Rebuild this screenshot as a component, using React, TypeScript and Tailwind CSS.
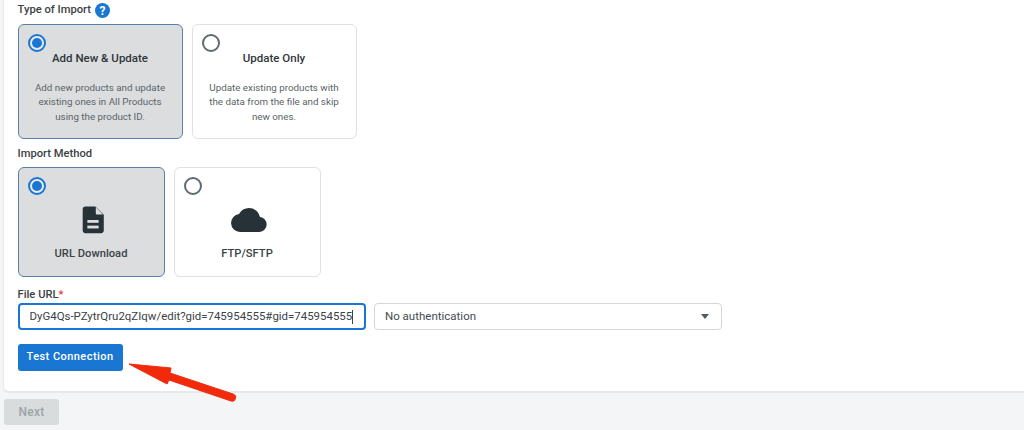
import { useState } from 'react';

function Radio({ checked }: { checked: boolean }) {
  return checked ? (
    <span className="flex h-[18px] w-[18px] items-center justify-center rounded-full border-[2px] border-[#1976d2] bg-white/40">
      <span className="h-[10px] w-[10px] rounded-full bg-[#1976d2]" />
    </span>
  ) : (
    <span className="block h-[18px] w-[18px] rounded-full border-[2px] border-[#5f6b70] bg-white" />
  );
}

function TypeCard({ title, lines, checked }: { title: string; lines: string[]; checked: boolean }) {
  return (
    <div
      className={`relative h-[115px] w-[165px] rounded-[6px] border text-center ${
        checked ? 'border-[#5b7fa8] bg-[#dcdddf]' : 'border-[#dfe1e3] bg-white'
      }`}
    >
      <div className="absolute left-[9px] top-[9px]">
        <Radio checked={checked} />
      </div>
      <div className="mt-[24px] text-[11.5px] leading-[18px] font-medium text-[#2f363a]">{title}</div>
      <div className="mt-[13.5px] text-[9.8px] leading-[14.5px] text-[#5a6468]">
        {lines.map((l) => (
          <div key={l}>{l}</div>
        ))}
      </div>
    </div>
  );
}

function MethodCard({ title, icon, checked }: { title: string; icon: React.ReactNode; checked: boolean }) {
  return (
    <div
      className={`relative flex h-[110px] w-[147px] flex-col items-center rounded-[6px] border ${
        checked ? 'border-[#5b7fa8] bg-[#dcdddf]' : 'border-[#dfe1e3] bg-white'
      }`}
    >
      <div className="absolute left-[9px] top-[9px]">
        <Radio checked={checked} />
      </div>
      <div className="mt-[36px] flex h-[32px] items-center justify-center">{icon}</div>
      <div className="mt-[9px] text-[11.2px] leading-[18px] font-medium text-[#3a4246]">{title}</div>
    </div>
  );
}

export default function App() {
  const [url] = useState('DyG4Qs-PZytrQru2qZIqw/edit?gid=745954555#gid=745954555');

  return (
    <div className="relative flex h-[430px] w-[1024px] flex-col overflow-hidden bg-[#f3f5f6] font-['Roboto',sans-serif]">
      {/* Form panel */}
      <div className="ml-[3px] h-[393px] rounded-bl-[6px] border-b-2 border-l border-[#e6e8e9] bg-white pl-[13.5px]">
        <div className="flex h-[24px] items-center gap-[4px] pb-[3px]">
          <span className="text-[11.2px] font-medium text-[#3a4246]">Type of Import</span>
          <span className="flex h-[15px] w-[15px] items-center justify-center rounded-full bg-[#1976d2] text-[12px] font-bold text-white">
            ?
          </span>
        </div>
        <div className="flex gap-[9px]">
          <TypeCard
            title="Add New & Update"
            checked
            lines={['Add new products and update', 'existing ones in All Products', 'using the product ID.']}
          />
          <TypeCard
            title="Update Only"
            checked={false}
            lines={['Update existing products with', 'the data from the file and skip', 'new ones.']}
          />
        </div>

        <div className="mt-[6px] h-[22px] text-[11.2px] leading-[17px] font-medium text-[#3a4246]">Import Method</div>
        <div className="flex gap-[9px]">
          <MethodCard
            title="URL Download"
            checked
            icon={
              <svg className="ml-[3px]" width="24" height="30" viewBox="0 0 24 32" fill="#263238">
                <path d="M4 1.5h10.5L23.5 10.5V27a3 3 0 0 1-3 3H4a3 3 0 0 1-3-3V4.5a3 3 0 0 1 3-3z" />
                <path d="M15 2.5v6.5a1 1 0 0 0 1 1h6.5z" fill="#dcdddf" />
                <rect x="6" y="16" width="12" height="3" fill="#dcdddf" />
                <rect x="6" y="22" width="12" height="3" fill="#dcdddf" />
              </svg>
            }
          />
          <MethodCard
            title="FTP/SFTP"
            checked={false}
            icon={
              <svg className="ml-[3px]" width="36" height="24" viewBox="0 0 24 16" fill="#263238">
                <path d="M19.35 6.04A7.49 7.49 0 0 0 12 0a7.5 7.5 0 0 0-6.65 4.04A6 6 0 0 0 6 16h13a5 5 0 0 0 .35-9.96z" />
              </svg>
            }
          />
        </div>

        <div className="mt-[9px] h-[17px] text-[11.2px] leading-[17px] font-medium text-[#3a4246]">
          File URL<span className="text-[#e53935]">*</span>
        </div>
        <div className="flex gap-[8.5px]">
          <div className="flex h-[27px] w-[348px] items-center overflow-hidden rounded-[4px] border-2 border-[#1976d2] bg-white pl-[10px]">
            <span className="whitespace-nowrap text-[11.45px] text-[#3a4246]">{url}</span>
            <span className="h-[14px] w-px bg-[#3a4246]" />
          </div>
          <div className="flex h-[27px] w-[348px] items-center justify-between rounded-[4px] border border-[#d5d8da] bg-white pl-[10px] pr-[12px]">
            <span className="text-[11.5px] text-[#444c50]">No authentication</span>
            <span className="h-0 w-0 border-x-[4.5px] border-t-[5px] border-x-transparent border-t-[#4f5b5f]" />
          </div>
        </div>

        <button className="mt-[14px] flex h-[27px] w-[105px] items-center justify-center rounded-[3px] bg-[#1976d2] text-[11px] font-medium tracking-[0.45px] text-white">
          Test Connection
        </button>
      </div>

      {/* Footer */}
      <button className="ml-[4px] mt-[6px] h-[26px] w-[55px] rounded-[3px] bg-[#d9dcdd] text-[12px] font-medium tracking-[0.2px] text-[#9da3a6]">
        Next
      </button>

      {/* Red annotation arrow */}
      <svg className="absolute left-[125px] top-[360px]" width="115" height="45" viewBox="0 0 115 45">
        <path d="M4 4 L46 8 L45 13 L108 34 A3.5 3.5 0 0 1 106 41 L44 20 L42 24 Z" fill="#f12a0c" stroke="#f12a0c" strokeWidth="1" strokeLinejoin="round" />
      </svg>
    </div>
  );
}
